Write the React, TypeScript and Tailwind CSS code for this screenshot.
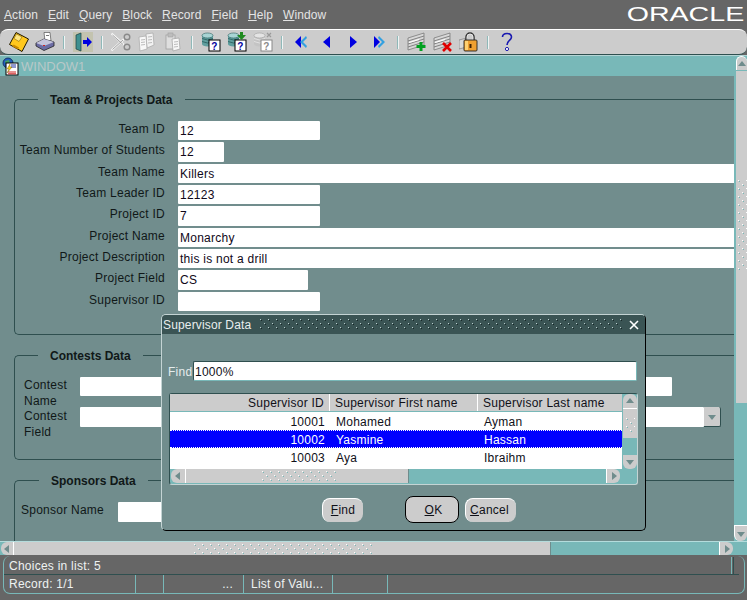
const menus = ["Action", "Edit", "Query", "Block", "Record", "Field", "Help", "Window"];

const teamFields = [
  { label: "Team ID", value: "12", w: "w-[142px]" },
  { label: "Team Number of Students", value: "12", w: "w-[46px]" },
  { label: "Team Name", value: "Killers", w: "w-[580px]" },
  { label: "Team Leader ID", value: "12123", w: "w-[142px]" },
  { label: "Project ID", value: "7", w: "w-[142px]" },
  { label: "Project Name", value: "Monarchy", w: "w-[580px]" },
  { label: "Project Description", value: "this is not a drill", w: "w-[580px]" },
  { label: "Project Field", value: "CS", w: "w-[130px]" },
  { label: "Supervisor ID", value: "", w: "w-[142px]" },
];

const rows = [
  { id: "10001", first: "Mohamed", last: "Ayman" },
  { id: "10002", first: "Yasmine", last: "Hassan", selected: true },
  { id: "10003", first: "Aya", last: "Ibraihm" },
];

function Dots({ id, w, h, a = "#ffffff", b = "#78b8b8", step = 8 }: { id: string; w: number; h: number; a?: string; b?: string; step?: number }) {
  return (
    <svg width={w} height={h} className="block shrink-0">
      <defs>
        <pattern id={id} width={step} height="8" patternUnits="userSpaceOnUse">
          <rect x="0" y="1" width="1" height="1" fill={a} />
          <rect x="1" y="2" width="1" height="1" fill={b} />
          <rect x={step / 2} y="5" width="1" height="1" fill={a} />
          <rect x={step / 2 + 1} y="6" width="1" height="1" fill={b} />
        </pattern>
      </defs>
      <rect width={w} height={h} fill={`url(#${id})`} />
    </svg>
  );
}

function Tri({ dir, size = 4 }: { dir: "up" | "down" | "left" | "right"; size?: number }) {
  const pts = {
    up: "5,2 9,7 1,7",
    down: "1,3 9,3 5,8",
    left: "7,1 7,9 2,5",
    right: "3,1 3,9 8,5",
  }[dir];
  return (
    <svg width={size * 2.5} height={size * 2.5} viewBox="0 0 10 10" className="block">
      <polygon points={pts} fill="#6f8c8c" />
    </svg>
  );
}

function Cell({ children }: { children: React.ReactNode }) {
  return <div className="w-[26px] h-[24px] flex items-center justify-center shrink-0">{children}</div>;
}

function Sep() {
  return (
    <div className="w-[12px] flex justify-center shrink-0">
      <div className="w-[2px] h-[13px] bg-[#f0f4f4] border-l border-[#8fb8b8]" />
    </div>
  );
}

function Svg({ children }: { children: React.ReactNode }) {
  return (
    <svg width="20" height="20" viewBox="0 0 20 20" className="block">
      {children}
    </svg>
  );
}

function SaveIcon() {
  return (
    <Svg>
      <polygon points="7,0.5 19.5,7 13,19.5 0.5,12.5" fill="#ffc81e" stroke="#201800" strokeWidth="1" />
      <polygon points="7.5,2 13,5 10,9.5 5,6.5" fill="#ffe680" stroke="#8a6a00" strokeWidth="0.6" />
      <polygon points="4.5,12.5 10,15.5 9,17.5 3.5,14.5" fill="#c98a00" />
    </Svg>
  );
}

function PrintIcon() {
  return (
    <Svg>
      <polygon points="9,0.5 15,0.5 16,9 10,9" fill="#ffffff" stroke="#555" strokeWidth="0.7" />
      <polygon points="1,11 9,7 19,10 19,14 9,18.5 1,14" fill="#6c6ca4" stroke="#222" strokeWidth="0.8" />
      <polygon points="1,11 9,14 19,10 9,7" fill="#c4c4dc" />
      <rect x="11" y="3" width="3" height="1" fill="#777" />
      <rect x="8" y="13" width="2" height="1" fill="#d02020" />
    </Svg>
  );
}

function ExitIcon() {
  return (
    <Svg>
      <rect x="0" y="0" width="20" height="20" fill="#b8b88c" opacity="0.45" />
      <rect x="5" y="2" width="2" height="15" fill="#2f6f6f" />
      <polygon points="3,3 8,1 8,19 3,17" fill="#3f9090" stroke="#1c4040" strokeWidth="0.7" />
      <polygon points="10,8 14,8 14,5 19,10 14,15 14,12 10,12" fill="#0000e0" />
    </Svg>
  );
}

function CutIcon() {
  return (
    <Svg>
      <path d="M0.5 1.5 L13 13 M0.5 18.5 L13 7" stroke="#f6f6f6" strokeWidth="2.2" fill="none" />
      <path d="M1.5 3 L12 12.5 M1.5 17.5 L12 8" stroke="#8a8a8a" strokeWidth="0.8" fill="none" />
      <circle cx="16" cy="5" r="2.8" fill="none" stroke="#8a8a8a" strokeWidth="1.4" />
      <circle cx="16" cy="15" r="2.8" fill="none" stroke="#8a8a8a" strokeWidth="1.4" />
    </Svg>
  );
}

function CopyIcon() {
  return (
    <Svg>
      <polygon points="9,2 16,1 17,13 10,16" fill="#f2f2f2" stroke="#a8a8a8" strokeWidth="0.7" />
      <polygon points="2,5 9,4 10,17 3,19" fill="#f8f8f8" stroke="#a8a8a8" strokeWidth="0.7" />
      <path d="M4 8 L8 7.5 M4 10.5 L8 10 M4 13 L8 12.5 M11 5 L15 4.5 M11 8 L15 7.5 M11 11 L15 10.5" stroke="#bcbcbc" strokeWidth="1" />
    </Svg>
  );
}

function PasteIcon() {
  return (
    <Svg>
      <rect x="3" y="3" width="9" height="14" fill="#dedede" stroke="#a0a0a0" strokeWidth="0.8" />
      <rect x="5" y="1" width="5" height="4" fill="#bdbdbd" stroke="#a0a0a0" strokeWidth="0.6" />
      <polygon points="9,7 16,6 17,17 10,19" fill="#f8f8f8" stroke="#a0a0a0" strokeWidth="0.7" />
      <path d="M11 10 L15 9.5 M11 12.5 L15 12 M11 15 L15 14.5" stroke="#bcbcbc" strokeWidth="1" />
    </Svg>
  );
}

function QueryIcon({ arrow, off }: { arrow?: boolean; off?: boolean }) {
  const body = off ? "#c4c4c4" : "#5f9e9e";
  const top = off ? "#e4e4e4" : "#a8d4d4";
  const qc = off ? "#8a8a8a" : "#0000a0";
  return (
    <Svg>
      <rect x="1" y="3" width="11" height="9" fill={body} />
      <ellipse cx="6.5" cy="3.5" rx="5.5" ry="2.5" fill={top} stroke={off ? "#a0a0a0" : "#2f6060"} strokeWidth="0.6" />
      <ellipse cx="6.5" cy="12" rx="5.5" ry="2.5" fill={body} />
      <path d="M1 6.5 Q6.5 9.5 12 6.5 M1 9.5 Q6.5 12.5 12 9.5" stroke={off ? "#eee" : "#1f5050"} strokeWidth="0.7" fill="none" />
      <rect x="8" y="8" width="11" height="11" fill="#ffffff" stroke={off ? "#888" : "#000"} strokeWidth="1" />
      <text x="13.5" y="17.5" textAnchor="middle" fontSize="10" fontWeight="700" fontFamily="Liberation Sans" fill={qc}>?</text>
      {arrow && <polygon points="13,0 16,0 16,3 19,3 14.5,8 10,3 13,3" fill="#1f8a1f" />}
      {off && <path d="M14 1 L18 5 M18 1 L14 5" stroke="#9a9a9a" strokeWidth="1.2" />}
    </Svg>
  );
}

function NavIcon({ dir, dbl }: { dir: "l" | "r"; dbl?: boolean }) {
  return (
    <svg width="14" height="14" viewBox="0 0 14 14" className="block">
      {dir === "l" ? (
        dbl ? (
          <>
            <polygon points="7,1 7,13 1,7" fill="#0000e0" />
            <polygon points="12,1 13,3 9,7 13,11 12,13 6,7" fill="#33a0e0" />
          </>
        ) : (
          <polygon points="10,1 10,13 3,7" fill="#0000e0" />
        )
      ) : dbl ? (
        <>
          <polygon points="2,1 2,13 8,7" fill="#0000e0" />
          <polygon points="7,1 6,3 10,7 6,11 7,13 13,7" fill="#33a0e0" />
        </>
      ) : (
        <polygon points="4,1 4,13 11,7" fill="#0000e0" />
      )}
    </svg>
  );
}

function RecordIcon({ kind }: { kind: "add" | "del" }) {
  return (
    <Svg>
      <polygon points="1,6 17,1 17,13 1,18" fill="#d8d8d8" stroke="#6f6f6f" strokeWidth="0.7" />
      <path d="M1 9 L17 4 M1 12 L17 7 M1 15 L17 10" stroke="#777" strokeWidth="0.9" />
      <path d="M2 10.5 L12 7.5" stroke="#fff" strokeWidth="1.2" />
      {kind === "add" ? (
        <path d="M14 10 V19 M9.5 14.5 H18.5" stroke="#00a020" strokeWidth="3" />
      ) : (
        <path d="M10 11 L18 19 M18 11 L10 19" stroke="#e00000" strokeWidth="2.6" />
      )}
    </Svg>
  );
}

function LockIcon() {
  return (
    <Svg>
      <polygon points="0,8 8,6 8,15 0,17" fill="#d8d8d8" stroke="#6f6f6f" strokeWidth="0.6" />
      <path d="M7 9 V5 a4 4 0 0 1 8 0 V9" fill="none" stroke="#333" strokeWidth="1.5" />
      <path d="M8 9 V5 a3 3 0 0 1 6 0 V9" fill="none" stroke="#f0f0f0" strokeWidth="0.7" />
      <rect x="5" y="8" width="13" height="11" rx="1" fill="#f0a030" stroke="#222" strokeWidth="0.9" />
      <rect x="6" y="9" width="3" height="9" fill="#ffd070" />
      <rect x="10.5" y="12" width="2" height="4" fill="#402000" />
    </Svg>
  );
}

function HelpIcon() {
  return (
    <svg width="14" height="20" viewBox="0 0 14 20" className="block">
      <path d="M2.5 5 C2.5 0.5 11.5 0 11.5 5 C11.5 8.5 7 8.5 7 13" fill="none" stroke="#1a1ab0" strokeWidth="1.6" />
      <circle cx="7" cy="17" r="1.6" fill="#fff" stroke="#1a1ab0" strokeWidth="1" />
    </svg>
  );
}

function WindowIcon() {
  return (
    <svg width="17" height="19" viewBox="0 0 17 19" className="block">
      <circle cx="6" cy="6" r="5" fill="#2060c0" stroke="#102050" strokeWidth="0.8" />
      <path d="M3 4 L7 3 L8 7 L4 8 Z" fill="#40a060" />
      <rect x="4" y="6" width="12" height="12" fill="#ffffff" stroke="#000" strokeWidth="1" />
      <path d="M9 8 H14 M9 10 H14" stroke="#2030a0" strokeWidth="1" />
      <path d="M6 15 H14 M6 16.8 H14" stroke="#d02020" strokeWidth="1" />
      <polygon points="8,7 5,12 7,12 5,16 10,10 8,10" fill="#f0d020" stroke="#705000" strokeWidth="0.4" />
    </svg>
  );
}

function Group({ title, titleLeft, className, children }: { title: string; titleLeft: string; className: string; children?: React.ReactNode }) {
  return (
    <div className={`relative ml-[14px] w-[740px] shrink-0 border-l border-t border-b border-[#2f4f4f] rounded-l-[5px] ${className}`}>
      <div className={`absolute top-[-8px] bg-[#718d8d] px-[12px] font-bold tracking-[0px] text-[#101818] leading-4 ${titleLeft}`}>{title}</div>
      {children}
    </div>
  );
}

function Field({ value, className }: { value: string; className: string }) {
  return <div className={`bg-white rounded-[1px] pl-[2px] leading-[21px] text-[#100818] overflow-hidden ${className}`}>{value}</div>;
}

function TableRow({ id, first, last, selected }: { id: string; first: string; last: string; selected?: boolean }) {
  return (
    <div className={`flex h-[18px] items-center pt-[1px] ${selected ? "bg-[#0000ff] text-white border-y border-dotted border-white" : "text-[#101018]"}`}>
      <div className="w-[155px] text-right">{id}</div>
      <div className="w-[159px] pl-[11px]">{first}</div>
      <div>{last}</div>
    </div>
  );
}

export default function App() {
  return (
    <div className="relative w-[747px] h-[600px] overflow-hidden bg-[#666666] flex flex-col text-[12px] tracking-[0.25px] font-['Liberation_Sans',Arial,sans-serif]">
      {/* menu */}
      <div className="h-[29px] shrink-0 flex items-center relative">
        <div className="flex gap-[10px] pl-[4px] pt-[1px] tracking-[0.1px] text-[#e4e4e4]">
          {menus.map((m) => (
            <span key={m}>
              <u>{m[0]}</u>
              {m.slice(1)}
            </span>
          ))}
        </div>
        <div className="absolute right-[3px] top-[2px] text-white text-[20px] leading-[24px] tracking-[0px] origin-right scale-x-[1.43]">ORACLE</div>
      </div>

      {/* toolbar */}
      <div className="h-[26px] shrink-0 bg-[#cccccc] border-t border-b border-t-white border-b-[#2f4f4f] rounded-[8px] flex items-center pl-[6px]">
        <Cell><SaveIcon /></Cell>
        <Cell><PrintIcon /></Cell>
        <Sep />
        <Cell><ExitIcon /></Cell>
        <Sep />
        <Cell><CutIcon /></Cell>
        <Cell><CopyIcon /></Cell>
        <Cell><PasteIcon /></Cell>
        <Sep />
        <Cell><QueryIcon /></Cell>
        <Cell><QueryIcon arrow /></Cell>
        <Cell><QueryIcon off /></Cell>
        <Sep />
        <Cell><NavIcon dir="l" dbl /></Cell>
        <Cell><NavIcon dir="l" /></Cell>
        <Cell><NavIcon dir="r" /></Cell>
        <Cell><NavIcon dir="r" dbl /></Cell>
        <Sep />
        <Cell><RecordIcon kind="add" /></Cell>
        <Cell><RecordIcon kind="del" /></Cell>
        <Cell><LockIcon /></Cell>
        <Sep />
        <Cell><HelpIcon /></Cell>
      </div>
      <div className="h-[1px] shrink-0 bg-[#b4d4d4]" />

      {/* window */}
      <div className="h-[485px] shrink-0 flex">
        <div className="w-[734px] shrink-0 flex flex-col">
          <div className="h-[20px] shrink-0 bg-[#78b8b8] flex items-center pl-[2px] gap-[2px]">
            <WindowIcon />
            <span className="text-[13px] pt-[1px] text-[#b8c8c8] tracking-[0px]">WINDOW1</span>
          </div>
          <div className="flex-1 min-h-0 bg-[#718d8d] overflow-hidden pt-[23px]">
            <Group title="Team & Projects Data" titleLeft="left-[23px]" className="h-[236px]">
              <div className="pt-[21px] grid auto-rows-[21.333px]">
                {teamFields.map((f) => (
                  <div key={f.label} className="flex">
                    <div className="w-[150px] text-right leading-4 text-[#101818] whitespace-nowrap">{f.label}</div>
                    <Field value={f.value} className={`ml-[13px] h-[19.33px] ${f.w}`} />
                  </div>
                ))}
              </div>
            </Group>
            <Group title="Contests Data" titleLeft="left-[23px]" className="h-[105px] mt-[20px]">
              <div className="pt-[21px] pl-[9px]">
                <div className="flex h-[31px]">
                  <div className="w-[56px] leading-4 text-[#101818]">Contest Name</div>
                  <Field value="" className="w-[592px] h-[19px]" />
                </div>
                <div className="flex h-[31px]">
                  <div className="w-[56px] leading-4 text-[#101818]">Contest Field</div>
                  <Field value="" className="w-[624px] h-[20px] -mt-[1px]" />
                  <div className="w-[17px] h-[20px] -mt-[1px] bg-[#cccccc] border-r border-b border-[#2f4f4f] rounded-r-[2px] flex items-center justify-center">
                    <Tri dir="down" />
                  </div>
                </div>
              </div>
            </Group>
            <Group title="Sponsors Data" titleLeft="left-[24px]" className="h-[80px] mt-[20px]">
              <div className="pt-[21px] pl-[6px] flex">
                <div className="w-[97px] leading-4 text-[#101818]">Sponsor Name</div>
                <Field value="" className="w-[300px] h-[20px]" />
              </div>
            </Group>
          </div>
        </div>

        {/* vertical scrollbar */}
        <div className="w-[13px] shrink-0 bg-[#78b8b8] flex flex-col items-end">
          <div className="w-[11px] h-[14px] bg-[#cccccc] border-t border-l border-white rounded-t-[6px] flex items-center justify-center">
            <Tri dir="up" />
          </div>
          <div className="w-[11px] h-[332px] mt-[1px] bg-[#cccccc] pt-[108px] pl-[2px]">
            <Dots id="vgrip" w={9} h={92} step={8} />
          </div>
          <div className="flex-1" />
          <div className="w-[13px] h-[16px] bg-[#cccccc] border-t border-l border-white rounded-b-[6px] flex items-center justify-center">
            <Tri dir="down" />
          </div>
        </div>
      </div>

      {/* horizontal scrollbar */}
      <div className="h-[14px] shrink-0 bg-[#78b8b8] border-t border-[#b4dcdc] flex">
        <div className="w-[13px] ml-[1px] bg-[#cccccc] rounded-l-[6px] flex items-center justify-center border-r border-white">
          <Tri dir="left" />
        </div>
        <div className="w-[537px] bg-[#cccccc] border-r border-[#6f8c8c] pl-[180px] pt-[1px]">
          <Dots id="hgrip" w={180} h={11} step={8} />
        </div>
        <div className="ml-[168px] w-[14px] bg-[#cccccc] border-l border-white rounded-r-[6px] flex items-center justify-center">
          <Tri dir="right" />
        </div>
      </div>

      {/* status */}
      <div className="mt-[1px] mx-[3px] w-[742px] h-[38px] shrink-0 border-l border-r border-b border-[#78b8b8] rounded-[7px] text-[#eef2f2] flex flex-col">
        <div className="h-[19px] shrink-0 mr-[5px] border-b border-[#2f4f4f] pl-[5px] pt-[1px] flex items-center justify-between">
          <span>Choices in list: 5</span>
          <div className="w-[3px] h-[17px] mr-[5px] border-l border-r border-l-[#78b8b8] border-r-[#2f4f4f]" />
        </div>
        <div className="flex-1 flex items-center">
          <div className="w-[131px] pl-[5px] h-full flex items-center">Record: 1/1</div>
          <div className="w-[28px] h-full border-l border-[#78b8b8]" />
          <div className="w-[80px] h-full border-l border-[#78b8b8] text-right pr-[10px]">...</div>
          <div className="w-[89px] h-full border-l border-[#78b8b8] pl-[7px] flex items-center">List of Valu...</div>
          <div className="w-[55px] h-full border-l border-[#78b8b8]" />
          <div className="h-full border-l border-[#78b8b8]" />
        </div>
      </div>

      {/* LOV dialog */}
      <div className="absolute left-[161px] top-[314px] w-[485px] h-[217px] bg-[#718d8d] border-l border-t border-[#c4d4d4] border-r-black border-b-black border-r border-b rounded-[5px] flex flex-col">
        <div className="h-[19px] shrink-0 bg-[#3a5454] flex items-center text-[#e8eeee] rounded-t-[4px]">
          <span className="pl-[1px] pt-[1px] w-[98px] shrink-0 whitespace-nowrap tracking-[0.15px]">Supervisor Data</span>
          <Dots id="titlegrip" w={362} h={13} a="#b8cccc" b="#182828" step={8} />
          <svg width="12" height="12" viewBox="0 0 12 12" className="ml-[6px] block">
            <path d="M2 2 L10 10 M10 2 L2 10" stroke="#ffffff" strokeWidth="1.6" />
          </svg>
        </div>
        <div className="mt-[27px] h-[20px] flex pl-[6px]">
          <div className="w-[25px] leading-[22px] text-[#e4ecec]">Find</div>
          <div className="w-[444px] bg-white border-t border-l border-t-[#2f4f4f] border-l-[#2f4f4f] border-r-[#78b8b8] border-b-[#78b8b8] border-r border-b rounded-[2px] pl-[1px] leading-[20px] text-[#101018]">1000%</div>
        </div>
        <div className="mt-[12px] ml-[7px] w-[469px] h-[92px] bg-[#78b8b8] border-t border-l border-[#2f4f4f] border-r-[#c4d4d4] border-b-[#c4d4d4] border-r border-b rounded-[3px] flex flex-col">
          <div className="h-[75px] shrink-0 flex">
            <div className="w-[452px] shrink-0 bg-white flex flex-col">
              <div className="h-[18px] shrink-0 bg-[#cccccc] flex items-center text-[#101018] border-b border-[#78b8b8]">
                <div className="w-[160px] pr-[5px] text-right border-r border-white h-full leading-[19px]">Supervisor ID</div>
                <div className="w-[148px] pl-[5px] border-r border-white h-full leading-[19px]">Supervisor First name</div>
                <div className="pl-[5px] leading-[19px] h-full whitespace-nowrap">Supervisor Last name</div>
              </div>
              {rows.map((r) => (
                <TableRow key={r.id} {...r} />
              ))}
            </div>
            <div className="ml-[1px] w-[14px] flex flex-col">
              <div className="h-[14px] bg-[#cccccc] rounded-t-[6px] flex items-center justify-center"><Tri dir="up" /></div>
              <div className="h-[30px] bg-[#cccccc] border-t border-white pt-[8px] pl-[3px]">
                <Dots id="listgrip" w={9} h={16} step={8} />
              </div>
              <div className="flex-1" />
              <div className="h-[14px] bg-[#cccccc] rounded-b-[6px] flex items-center justify-center"><Tri dir="down" /></div>
            </div>
          </div>
          <div className="h-[14px] flex">
            <div className="w-[14px] ml-[1px] bg-[#cccccc] rounded-l-[6px] flex items-center justify-center"><Tri dir="left" /></div>
            <div className="w-[224px] bg-[#cccccc] border-l border-white border-r border-r-[#6f8c8c] pl-[76px] pt-[1px]">
              <Dots id="lsthgrip" w={76} h={11} step={8} />
            </div>
            <div className="ml-[197px] w-[14px] bg-[#cccccc] border-l border-white rounded-r-[6px] flex items-center justify-center"><Tri dir="right" /></div>
          </div>
        </div>
        <div className="mt-[11px] flex items-center text-[#101018] h-[27px]">
          <button className="ml-[160px] w-[41px] h-[24px] bg-[#cccccc] border-t border-l border-white rounded-[8px]"><u>F</u>ind</button>
          <button className="ml-[42px] w-[54px] h-[27px] pl-[3px] bg-[#cccccc] border border-black rounded-[8px]"><u>O</u>K</button>
          <button className="ml-[6px] w-[51px] h-[24px] pr-[3px] bg-[#cccccc] border-t border-l border-white rounded-[8px]"><u>C</u>ancel</button>
        </div>
      </div>
    </div>
  );
}
